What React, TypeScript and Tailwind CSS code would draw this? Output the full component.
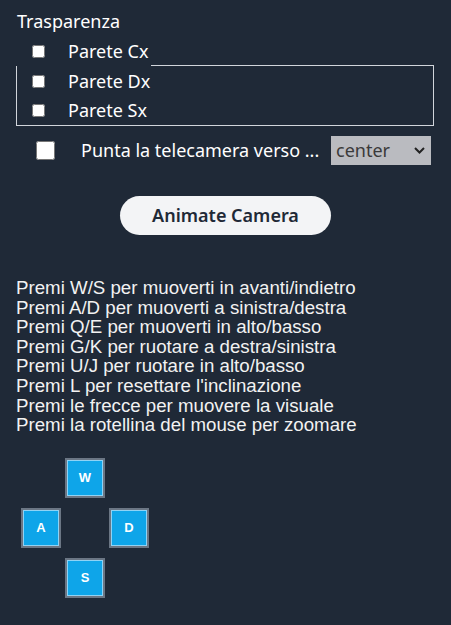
import React from "react";

const ui = { fontFamily: '"Noto Sans", "Open Sans", sans-serif' };
const arial = { fontFamily: '"Liberation Sans", Arial, sans-serif' };

function Key({ label }: { label: string }) {
  return (
    <div
      className="w-[40px] h-[40px] bg-[#0ea5e9] border-2 border-[#6b7684] shadow-[inset_0_0_0_1px_#8fd3f5] flex items-center justify-center text-white text-[13px] font-bold"
      style={arial}
    >
      {label}
    </div>
  );
}

export default function App() {
  const lines = [
    "Premi W/S per muoverti in avanti/indietro",
    "Premi A/D per muoverti a sinistra/destra",
    "Premi Q/E per muoverti in alto/basso",
    "Premi G/K per ruotare a destra/sinistra",
    "Premi U/J per ruotare in alto/basso",
    "Premi L per resettare l'inclinazione",
    "Premi le frecce per muovere la visuale",
    "Premi la rotellina del mouse per zoomare",
  ];
  return (
    <div className="min-h-screen bg-[#1f2937] text-white px-4" style={ui}>
      <div className="pt-[9px] leading-6 text-[18px] pl-px">Trasparenza</div>
      <div className="mt-[3px] w-[418px] h-[30px] flex">
        <div className="w-[135px] flex items-center">
          <input type="checkbox" className="ml-4 m-0 w-[13px] h-[13px]" />
          <span className="ml-[23px] text-[18px]">Parete Cx</span>
        </div>
        <div className="flex-1 border-b border-[#d1d5db]" />
      </div>
      <div className="w-[418px] border-x border-b border-[#d1d5db]">
        <div className="h-[30px] flex items-center">
          <input type="checkbox" className="ml-[15px] m-0 w-[13px] h-[13px]" />
          <span className="ml-[23px] text-[18px]">Parete Dx</span>
        </div>
        <div className="h-[29px] flex items-center">
          <input type="checkbox" className="ml-[15px] m-0 w-[13px] h-[13px]" />
          <span className="ml-[23px] text-[18px]">Parete Sx</span>
        </div>
      </div>
      <div className="mt-[10px] h-[29px] flex items-center">
        <input type="checkbox" className="ml-[20px] m-0 w-[19px] h-[19px]" />
        <span className="ml-[26px] text-[18px] whitespace-nowrap">Punta la telecamera verso ...</span>
        <div className="ml-auto mr-[4px] relative w-[100px] h-[29px] bg-[#babbc0] text-[#3a3a3a] text-[18px] flex items-center pl-[5px]">
          center
          <svg className="absolute right-[6px] top-[11px]" width="11" height="7" viewBox="0 0 11 7">
            <path d="M1 1 L5.5 5.5 L10 1" fill="none" stroke="#222" strokeWidth="2" />
          </svg>
        </div>
      </div>
      <div className="mt-[31px] flex justify-center">
        <button className="w-[211px] h-[39px] rounded-full bg-[#f3f4f6] text-[#1f2937] text-[18px] font-semibold">
          Animate Camera
        </button>
      </div>
      <div className="mt-[43px] text-[18.7px] leading-[19.6px] text-[#f2f2f2]" style={arial}>
        {lines.map((l) => (
          <div key={l} className="whitespace-nowrap">{l}</div>
        ))}
      </div>
      <div className="mt-[23px] ml-[5px] grid grid-cols-[40px_40px_40px] gap-x-[4px] gap-y-[10px] w-max">
        <div />
        <Key label="W" />
        <div />
        <Key label="A" />
        <div />
        <Key label="D" />
        <div />
        <Key label="S" />
        <div />
      </div>
    </div>
  );
}
